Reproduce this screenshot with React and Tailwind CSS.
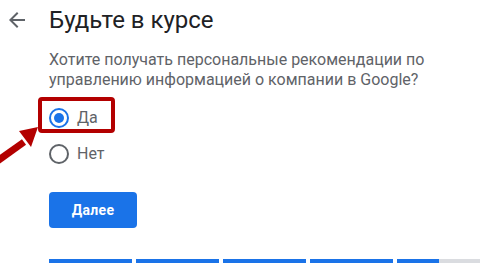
import React from 'react'

const Radio = ({checked, label}) => {
  return (
    <label className="flex items-center h-9 gap-2">
      <span className={"w-5 h-5 rounded-full border-2 flex items-center justify-center " + (checked ? "border-[#1a73e8]" : "border-[#5f6368]")}>
        {checked && <span className="w-[10px] h-[10px] rounded-full bg-[#1a73e8]"></span>}
      </span>
      <span className="text-base text-[#5f6368]">{label}</span>
    </label>
  )
}

const App = () => {
  const steps = [1, 1, 1, 1, 0.5]
  return (
    <div className="relative w-[481px] h-[266px] bg-white overflow-hidden font-['Roboto',sans-serif]">
        <div className="flex items-center pl-[5px] pt-1 gap-5">
            <svg width="24" height="24" viewBox="0 0 24 24" className="fill-[#5f6368]">
                <path d="M20 11H7.83l5.59-5.59L12 4l-8 8 8 8 1.41-1.41L7.83 13H20v-2z" />
            </svg>
            <h1 className="text-2xl leading-8 text-[#202124]">Будьте в курсе</h1>
        </div>
        <div className="pl-[49px]">
            <p className="mt-[14px] text-base leading-5 text-[#5f6368]">Хотите получать персональные рекомендации по управлению информацией о компании в Google?</p>
            <div className="mt-[10px]">
                <Radio checked label="Да" />
                <Radio label="Нет" />
            </div>
            <button className="mt-5 w-[88px] h-9 rounded bg-[#1a73e8] text-white text-sm font-bold tracking-wide">Далее</button>
            <div className="mt-[31px] flex gap-1 pr-px">
                {steps.map((s, i) => (
                    <div key={i} className="flex-1 h-1 bg-[#dadce0]">
                        {s === 1 ? <div className="h-1 bg-[#1a73e8]"></div> : <div className="h-1 w-[42px] bg-[#1a73e8]"></div>}
                    </div>
                ))}
            </div>
        </div>

        {/* annotation overlay */}
        <div className="absolute left-[38px] top-[97px] w-[77px] h-9 border-4 border-[#b30000] rounded-sm"></div>
        <svg className="absolute left-0 top-[110px]" width="45" height="60" viewBox="0 0 45 60">
            <path d="M-4 52 L24 32" stroke="#b30000" strokeWidth="7" />
            <polygon points="38,17 19,21 31,37" fill="#b30000" />
        </svg>
    </div>
  )
}

export default App
